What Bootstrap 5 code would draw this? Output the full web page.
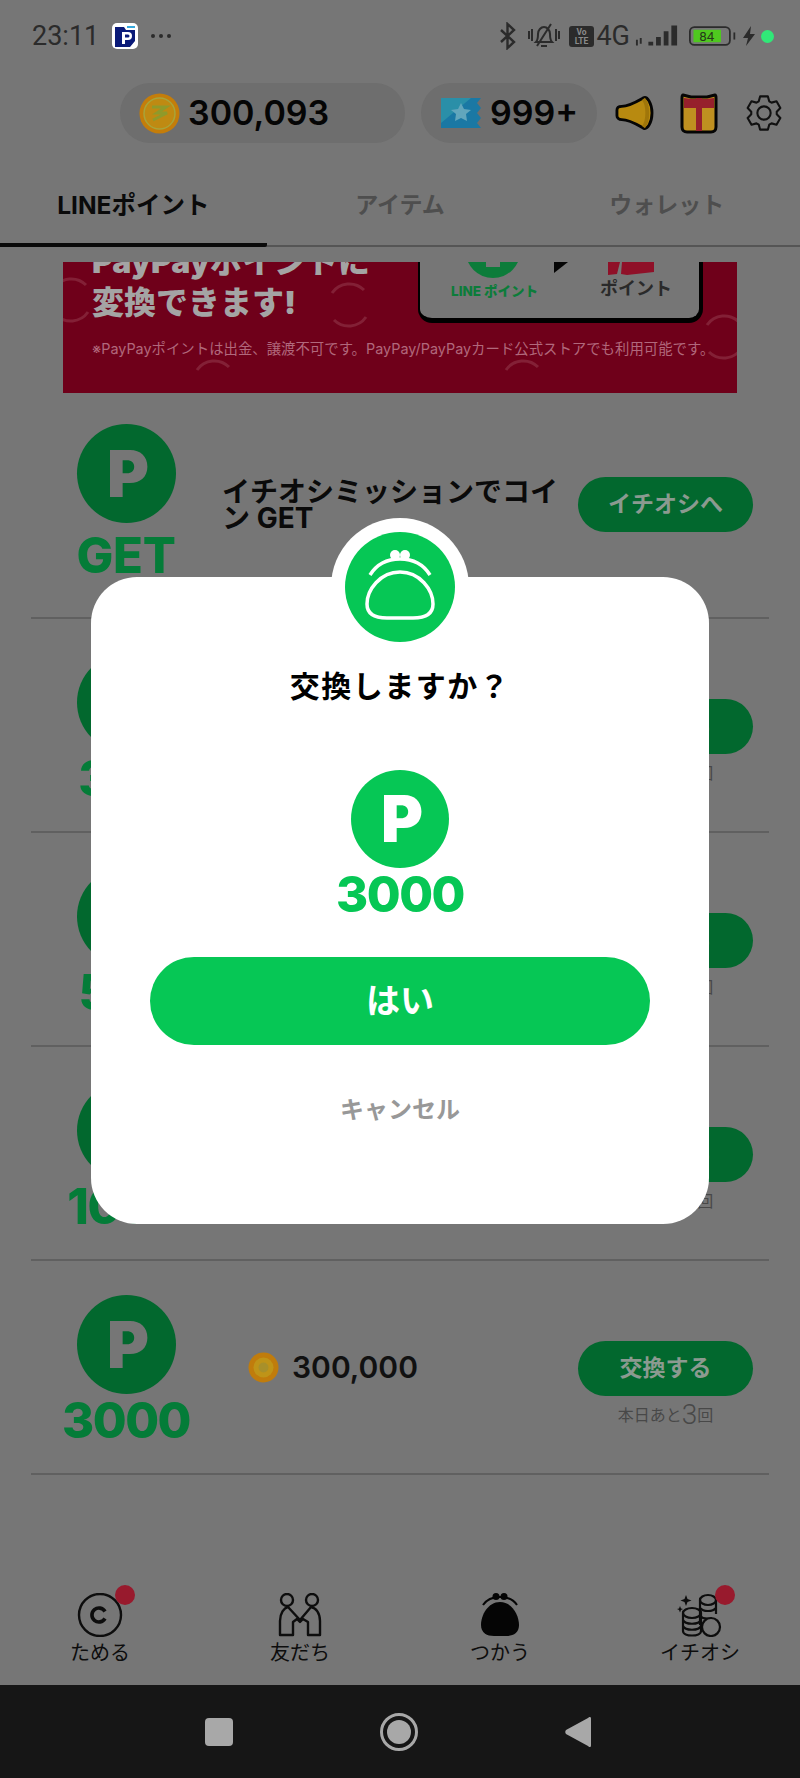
<!DOCTYPE html>
<html lang="ja">
<head>
<meta charset="utf-8">
<title>LINEポイント</title>
<link href="https://cdn.jsdelivr.net/npm/bootstrap@5.3.0/dist/css/bootstrap.min.css" rel="stylesheet">
<style>
html,body{margin:0;padding:0;background:#767676}
body{width:800px;height:1778px;position:relative;overflow:hidden;display:flex;flex-direction:column;font-family:Inter,"Noto Sans CJK JP",sans-serif;color:#0c0c0c}
.stat-bar{height:72px;padding:0 26px 0 32px;color:#2b2b2b;font-family:Roboto,"Noto Sans CJK JP",sans-serif;flex:none}
.stat-time{font-size:27px;line-height:1;width:64px;white-space:nowrap}
.app-ico{width:26px;height:26px;margin-left:16px;margin-right:12px;background:#fff;border-radius:5px;display:block}
.stat-four{font-size:27px;line-height:1;margin:0 5px 0 2px}
.sig-ico{margin-right:10px}
.bolt-ico{margin-left:5px}
.dot-ico{margin-left:5px}
.bell-ico{margin:0 8px 0 10px}
.head-bar{height:60px;margin-top:11px;padding-right:17px;flex:none}
.wallet-pill{height:60px;background:#6e6e6e;border-radius:30px;font-weight:600;font-size:34px;color:#050505;line-height:1}
.pill-coin{width:285px;padding-left:19px;margin-right:16px}
.pill-tick{width:176px;padding-left:19px;margin-right:17px}
.horn-ico{margin-right:26px}
.gift-ico{margin-right:27px}
.tab-row{height:104px;position:relative;border-bottom:2px solid #555;flex:none}
.tab-cell{width:33.333%;text-align:center;font-size:23px;font-weight:700;color:#4e4e4e;padding-top:45px;line-height:34px;margin-bottom:-2px}
.tab-on{color:#0a0a0a;font-size:24.500px;border-bottom:4px solid #0a0a0a;border-radius:0 2px 2px 0}
.promo{width:674px;height:131px;margin:15px auto 0;background:#6f001a;position:relative;overflow:hidden;padding:0 0 34px 29px;display:flex;flex-direction:column;justify-content:flex-end;flex:none}
.promo-deco{position:absolute;left:0;top:0}
.promo-head{font-size:32px;line-height:36px;font-weight:900;color:#a4a4a4;position:relative;white-space:nowrap}
.promo-top{margin-bottom:5px}
.promo-note{font-size:14.400px;line-height:20px;color:#b1687c;margin-top:18px;white-space:nowrap;position:relative}
.promo-card{position:absolute;left:355px;top:-20px;width:285px;height:81px;background:#767676;border-radius:14px;border:0 solid #000;border-width:0 4px 5px 2px}
.promo-line{position:absolute;left:31px;top:39px;font-size:13.500px;font-weight:800;line-height:20px;color:#0c7c3a;white-space:nowrap}
.promo-pt{position:absolute;left:180px;top:34px;font-size:18px;font-weight:700;line-height:26px;color:#2a2a2a;white-space:nowrap}
.ex-row{height:214px;margin:0 31px;border-bottom:2px solid #606060;flex:none}
.ex-first{height:226px}
.ex-left{width:190px;flex:none;padding-top:4px}
.ex-first .ex-left{margin-bottom:8px;padding-top:0}
.pt-disc{width:99px;height:99px;border-radius:50%;background:#02682e;color:#767676;font-size:64px;font-weight:900;line-height:1;padding-left:4px}
.pt-num{font-size:49px;font-weight:800;color:#047c38;line-height:44px;margin-top:5px;text-align:center;letter-spacing:-1.500px}
.pt-get{margin-top:11px;letter-spacing:-.3px}
.ex-mid{width:356px;flex:none;font-size:28px;font-weight:700;line-height:26px;margin-left:1px;color:#0a0a0a}
.ex-price{padding-left:26px;font-size:30px;font-weight:600;color:#111;gap:13px;line-height:1}
.ex-right{width:175px;flex:none;margin-left:auto;margin-right:16px}
.ex-first .ex-right{padding-bottom:2px}
.ex-side{padding-top:35px}
.go-btn{display:block;width:175px;height:55px;padding:0;border:0;border-radius:28px;background:#02682e;color:#8b9a90;font-size:23px;font-weight:700;line-height:55px;text-align:center}
.go-note{height:28px;margin-top:5px;font-size:16px;line-height:28px;color:#484848;text-align:center}
.go-note b{font-size:28px;font-weight:300;font-family:Roboto,sans-serif;vertical-align:-3px;line-height:1}
.tab-foot{height:96px;margin-top:auto;padding-top:4px;color:#0d0d0d;flex:none}
.foot-cell{width:200px;position:relative;font-size:20px;line-height:22px;text-align:center}
.foot-cell svg{display:block;margin:0 auto 5px}
.red-dot{position:absolute;top:-8px;left:115px;width:20px;height:20px;border-radius:50%;background:#981a2d}
.sys-bar{height:93px;background:#161616;flex:none}
.sys-square{width:28px;height:28px;border-radius:4px;background:#a8a8a8;display:block;margin-left:205px}
.sys-ring{margin-left:147px}
.sys-back{margin-left:146px}
.dim-modal{position:absolute;left:91px;top:577px;width:618px;height:647px;background:#fff;border-radius:46px;text-align:center;padding-top:89px}
.halo{position:absolute;left:240px;top:-59px;width:138px;height:138px;border-radius:50%;background:#fff;padding:14px}
.modal-q{font-size:30px;line-height:40px;font-weight:700;color:#000;letter-spacing:1.500px}
.modal-disc{width:98px;height:98px;border-radius:50%;background:#06c755;color:#fff;font-size:64px;font-weight:900;line-height:1;margin:64px auto 0;padding-left:4px}
.modal-num{font-size:49px;font-weight:800;color:#06c755;line-height:50px;margin-top:2px;letter-spacing:-1.500px}
.yes-btn{display:block;width:500px;height:88px;margin:37px auto 0;border:0;border-radius:44px;background:#06c755;color:#fff;font-size:34px;font-weight:700;line-height:88px;padding:0}
.no-link{font-size:24px;font-weight:700;line-height:40px;color:#989898;margin-top:45px}
</style>
</head>
<body>

<div class="stat-bar d-flex align-items-center">
  <span class="stat-time">23:11</span>
  <svg class="app-ico" viewBox="0 0 26 26"><path d="M3 4h9l2 3h9v11l-5 6H3z" fill="#0a1a78"/><rect x="15" y="3" width="8" height="2" fill="#35a8dc"/><path d="M10 9h6a3.500 3.500 0 0 1 0 8h-3v4h-3z" fill="#fff"/><path d="M13 11.500h3a1.400 1.400 0 0 1 0 3h-3z" fill="#0a1a78"/></svg>
  <svg width="22" height="6" viewBox="0 0 22 6"><circle cx="3" cy="3" r="2" fill="#2b2b2b"/><circle cx="11" cy="3" r="2" fill="#2b2b2b"/><circle cx="19" cy="3" r="2" fill="#2b2b2b"/></svg>
  <div class="ms-auto d-flex align-items-center">
    <svg width="18" height="28" viewBox="0 0 18 28"><path d="M2 8l13 12-6.500 6V2L15 8 2 20" fill="none" stroke="#2b2b2b" stroke-width="2.400"/></svg>
    <svg class="bell-ico" width="34" height="28" viewBox="0 0 34 28"><path d="M9 20c2-2 2-4 2-8 0-4 3-7 6-7s6 3 6 7c0 4 0 6 2 8z" fill="none" stroke="#2b2b2b" stroke-width="2"/><path d="M14 24h6M24 2L10 24" stroke="#2b2b2b" stroke-width="2"/><path d="M2 9v8M5 7v12M29 7v12M32 9v8" stroke="#2b2b2b" stroke-width="2"/></svg>
    <svg width="25" height="21" viewBox="0 0 25 21"><rect width="25" height="21" rx="3" fill="#2b2b2b"/><text x="12.500" y="9" text-anchor="middle" font-family="Roboto,sans-serif" font-size="8.500" font-weight="700" fill="#8a8a8a">Vo</text><text x="12.500" y="18" text-anchor="middle" font-family="Roboto,sans-serif" font-size="8.500" font-weight="700" fill="#8a8a8a">LTE</text></svg>
    <span class="stat-four">4G</span>
    <svg class="sig-ico" width="44" height="24" viewBox="0 0 46 24"><path d="M1 16h2v6H1zM5 14h2v6H5zM14 18h5v4h-5zM22 13h5v9h-5zM30 7h5v15h-5zM38 1h6v21h-6z" fill="#2b2b2b"/></svg>
    <svg width="48" height="22" viewBox="0 0 54 22"><rect x="1" y="1" width="45" height="20" rx="5" fill="none" stroke="#2b2b2b" stroke-width="2"/><rect x="5" y="4" width="31" height="14" fill="#4fc81f"/><text x="20" y="17" text-anchor="middle" font-family="Roboto,sans-serif" font-size="15" fill="#263a1a">84</text><rect x="50" y="7" width="2" height="8" fill="#2b2b2b"/></svg>
    <svg class="bolt-ico" width="14" height="22" viewBox="0 0 14 22"><path d="M9 1L1 13h5l-2 8 9-12H8z" fill="#2b2b2b"/></svg>
    <svg class="dot-ico" width="13" height="13" viewBox="0 0 13 13"><circle cx="6.500" cy="6.500" r="6.500" fill="#30e878"/></svg>
  </div>
</div>

<div class="head-bar d-flex justify-content-end align-items-center">
  <div class="wallet-pill pill-coin d-flex align-items-center gap-2">
    <svg width="41" height="41" viewBox="0 0 41 41"><circle cx="20.500" cy="20.500" r="20" fill="#c47d0a"/><circle cx="20.500" cy="20.500" r="15.500" fill="#bf8a12" stroke="#a8a43a" stroke-width="1.500"/><path d="M13 14h14l-9 6h10l-14 7" fill="none" stroke="#8f9a2a" stroke-width="3"/></svg>
    <span>300,093</span>
  </div>
  <div class="wallet-pill pill-tick d-flex align-items-center gap-2">
    <svg width="42" height="32" viewBox="0 0 42 32"><path d="M1 1h40l-4 5 4 5-4 5 4 5-4 5 4 5H1z" fill="#1a78a4"/><path d="M1 1h30L1 26z" fill="#2a8fa8"/><path d="M21 6l3 6 7 1-5 4 1 7-6-3-6 3 1-7-5-4 7-1z" fill="#62a6bc"/></svg>
    <span>999+</span>
  </div>
  <svg class="horn-ico" width="40" height="36" viewBox="0 0 42 38"><path d="M3 16c0-3 2-4 5-4 8 0 16-5 23-9 4-2 9 6 9 16s-5 18-9 16c-7-4-15-9-23-9-3 0-5-2-5-4z" fill="#b88a10" stroke="#050505" stroke-width="3" stroke-linejoin="round"/><path d="M31 4c3 4 4 9 4 15s-1 11-4 15" fill="none" stroke="#a0760a" stroke-width="4"/></svg>
  <svg class="gift-ico" width="38" height="42" viewBox="0 0 38 42"><path d="M3 3l8 2h16l8-2c1 0 1 1 1 3v29c0 3-2 5-5 5H7c-3 0-5-2-5-5V6c0-2 0-3 1-3z" fill="#bf9020" stroke="#050505" stroke-width="3" stroke-linejoin="round"/><path d="M4 6l8 1h14l8-1v10H4z" fill="#96202c"/><rect x="16" y="6" width="6" height="33" fill="#96202c"/></svg>
  <svg width="38" height="40" viewBox="-20 -20 40 40"><polygon points="-5.490,-12.330 -4.050,-17.540 4.050,-17.540 5.490,-12.330 7.930,-10.920 13.160,-12.280 17.210,-5.260 13.420,-1.410 13.420,1.410 17.210,5.260 13.160,12.280 7.930,10.920 5.490,12.330 4.050,17.540 -4.050,17.540 -5.490,12.330 -7.930,10.920 -13.160,12.280 -17.210,5.260 -13.420,1.410 -13.420,-1.410 -17.210,-5.260 -13.160,-12.280 -7.930,-10.920" fill="none" stroke="#111" stroke-width="2.200" stroke-linejoin="round"/><circle r="7" fill="none" stroke="#111" stroke-width="2.200"/></svg>
</div>

<div class="tab-row d-flex">
  <div class="tab-cell tab-on">LINEポイント</div>
  <div class="tab-cell">アイテム</div>
  <div class="tab-cell">ウォレット</div>
</div>

<div class="promo">
  <svg class="promo-deco" width="674" height="131" viewBox="0 0 674 131" fill="none" stroke="#832036" stroke-width="3">
    <defs><g id="loopmark"><path d="M-17 -12A21 21 0 0 1 15 -15"/><path d="M17 12A21 21 0 0 1 -15 15"/></g></defs>
    <use href="#loopmark" transform="translate(286 43)"/>
    <use href="#loopmark" transform="translate(151 120)"/>
    <use href="#loopmark" transform="translate(460 120)"/>
    <use href="#loopmark" transform="translate(661 75)"/>
    <use href="#loopmark" transform="translate(8 38)"/>
  </svg>
  <div class="promo-head promo-top">PayPayポイントに</div>
  <div class="promo-head">変換できます!</div>
  <div class="promo-note">※PayPayポイントは出金、譲渡不可です。PayPay/PayPayカード公式ストアでも利用可能です。</div>
  <div class="promo-card">
    <svg width="279" height="50" viewBox="0 0 279 50" class="promo-deco"><circle cx="73" cy="8.500" r="27.500" fill="#0c7c3a"/><rect x="66" y="18" width="14" height="7" fill="#767676"/><path d="M134 20h14l-14 11z" fill="#050505"/><path d="M188 20h12l-3 12-9 1zM202 20h32v10l-27 3-6-1z" fill="#8f1028"/></svg>
    <div class="promo-line">LINE ポイント</div>
    <div class="promo-pt">ポイント</div>
  </div>
</div>

<div class="ex-row ex-first d-flex align-items-center">
  <div class="ex-left d-flex flex-column align-items-center">
    <div class="pt-disc d-flex align-items-center justify-content-center">P</div>
    <div class="pt-num pt-get">GET</div>
  </div>
  <div class="ex-mid">イチオシミッションでコイン GET</div>
  <div class="ex-right"><span class="go-btn">イチオシへ</span></div>
</div>

<div class="ex-row d-flex align-items-center">
  <div class="ex-left d-flex flex-column align-items-center">
    <div class="pt-disc d-flex align-items-center justify-content-center">P</div>
    <div class="pt-num">300</div>
  </div>
  <div class="ex-mid ex-price d-flex align-items-center">
    <svg width="31" height="31" viewBox="0 0 31 31"><circle cx="15.500" cy="15.500" r="15" fill="#c07c0c"/><circle cx="15.500" cy="15.500" r="10" fill="#bf9418"/></svg><span>30,000</span>
  </div>
  <div class="ex-right ex-side"><span class="go-btn">交換する</span><div class="go-note">本日あと<b>3</b>回</div></div>
</div>

<div class="ex-row d-flex align-items-center">
  <div class="ex-left d-flex flex-column align-items-center">
    <div class="pt-disc d-flex align-items-center justify-content-center">P</div>
    <div class="pt-num">500</div>
  </div>
  <div class="ex-mid ex-price d-flex align-items-center">
    <svg width="31" height="31" viewBox="0 0 31 31"><circle cx="15.500" cy="15.500" r="15" fill="#c07c0c"/><circle cx="15.500" cy="15.500" r="10" fill="#bf9418"/></svg><span>50,000</span>
  </div>
  <div class="ex-right ex-side"><span class="go-btn">交換する</span><div class="go-note">本日あと<b>3</b>回</div></div>
</div>

<div class="ex-row d-flex align-items-center">
  <div class="ex-left d-flex flex-column align-items-center">
    <div class="pt-disc d-flex align-items-center justify-content-center">P</div>
    <div class="pt-num">1000</div>
  </div>
  <div class="ex-mid ex-price d-flex align-items-center">
    <svg width="31" height="31" viewBox="0 0 31 31"><circle cx="15.500" cy="15.500" r="15" fill="#c07c0c"/><circle cx="15.500" cy="15.500" r="10" fill="#bf9418"/></svg><span>100,000</span>
  </div>
  <div class="ex-right ex-side"><span class="go-btn">交換する</span><div class="go-note">本日あと<b>3</b>回</div></div>
</div>

<div class="ex-row d-flex align-items-center">
  <div class="ex-left d-flex flex-column align-items-center">
    <div class="pt-disc d-flex align-items-center justify-content-center">P</div>
    <div class="pt-num">3000</div>
  </div>
  <div class="ex-mid ex-price d-flex align-items-center">
    <svg width="31" height="31" viewBox="0 0 31 31"><circle cx="15.500" cy="15.500" r="15" fill="#c07c0c"/><circle cx="15.500" cy="15.500" r="10" fill="#bf9418"/><circle cx="15.500" cy="15.500" r="5" fill="#a8902a"/></svg><span>300,000</span>
  </div>
  <div class="ex-right ex-side"><span class="go-btn">交換する</span><div class="go-note">本日あと<b>3</b>回</div></div>
</div>

<div class="tab-foot d-flex">
  <div class="foot-cell">
    <svg width="46" height="44" viewBox="0 0 46 44"><circle cx="23" cy="22" r="21" fill="none" stroke="#0d0d0d" stroke-width="2.400"/><path d="M28 18.500a7 7 0 1 0 0 7" fill="none" stroke="#0d0d0d" stroke-width="3.600"/></svg>
    <span class="red-dot"></span>
    ためる
  </div>
  <div class="foot-cell">
    <svg width="46" height="44" viewBox="0 0 46 44"><g fill="none" stroke="#0d0d0d" stroke-width="2.400" stroke-linejoin="round" stroke-linecap="round"><circle cx="10" cy="7" r="6"/><circle cx="35" cy="7" r="6"/><path d="M3 42V28c0-8 4-13 8-14l12 13 11-13c5 1 9 6 9 14v14H31V29l-5-3-3 3-3-3-4 3v13z"/></g></svg>
    友だち
  </div>
  <div class="foot-cell">
    <svg width="46" height="44" viewBox="0 0 46 44"><path d="M23 9c12 0 19 13 19 23 0 8-6 11-13 11H17C10 43 4 40 4 32 4 22 11 9 23 9z" fill="#050505"/><path d="M6 12C10 6 16 4 23 4s13 2 17 8" fill="none" stroke="#050505" stroke-width="2"/><circle cx="19" cy="3.500" r="3.500" fill="#050505"/><circle cx="27" cy="3.500" r="3.500" fill="#050505"/></svg>
    つかう
  </div>
  <div class="foot-cell">
    <svg width="46" height="44" viewBox="0 0 46 44"><g fill="none" stroke="#0d0d0d" stroke-width="2.200"><ellipse cx="31" cy="7" rx="8" ry="5"/><path d="M23 7v25M39 7v14M23 15c3 4 13 4 16 0M23 23c3 3 8 3 12 2"/><ellipse cx="15" cy="20" rx="9" ry="5"/><path d="M6 20v18c0 6 18 6 18 0V20M6 27c2 5 16 5 18 0M6 33c2 5 16 5 18 0"/><circle cx="34" cy="34" r="9" fill="#767676"/></g><path d="M9 2l1.500 4 4 1.500-4 1.500L9 13l-1.500-4-4-1.500 4-1.500zM3 13l1 2.500 2 .5-2 1-1 2.500-1-2.500-2-1 2-.5z" fill="#0d0d0d"/></svg>
    <span class="red-dot"></span>
    イチオシ
  </div>
</div>

<div class="sys-bar d-flex align-items-center position-relative">
  <span class="sys-square"></span>
  <svg class="sys-ring" width="38" height="38" viewBox="0 0 38 38"><circle cx="19" cy="19" r="17.500" fill="none" stroke="#a8a8a8" stroke-width="3"/><circle cx="19" cy="19" r="12" fill="#a8a8a8"/></svg>
  <svg class="sys-back" width="28" height="32" viewBox="0 0 28 32"><path d="M26 1c1 0 1 1 1 2v26c0 1 0 2-1 2-1 0-1 0-2-1L2 18c-1-1-1-3 0-4L24 2c1-1 1-1 2-1z" fill="#a8a8a8"/></svg>
</div>

<div class="dim-modal">
  <div class="halo">
    <svg width="110" height="110" viewBox="0 0 110 110" class="d-block"><circle cx="55" cy="55" r="55" fill="#06c755"/><path d="M55 40c20 0 33 18 33 32 0 10-8 14-20 14H42c-12 0-20-4-20-14 0-14 13-32 33-32z" fill="none" stroke="#fff" stroke-width="3.500"/><path d="M25 43c8-13 20-16 30-16s22 3 30 16" fill="none" stroke="#fff" stroke-width="3.500"/><circle cx="50" cy="23" r="5" fill="#fff"/><circle cx="60" cy="23" r="5" fill="#fff"/></svg>
  </div>
  <div class="modal-q">交換しますか？</div>
  <div class="modal-disc d-flex align-items-center justify-content-center">P</div>
  <div class="modal-num">3000</div>
  <button type="button" class="yes-btn">はい</button>
  <div class="no-link">キャンセル</div>
</div>

<script src="https://cdn.jsdelivr.net/npm/bootstrap@5.3.0/dist/js/bootstrap.bundle.min.js"></script>
</body>
</html>
